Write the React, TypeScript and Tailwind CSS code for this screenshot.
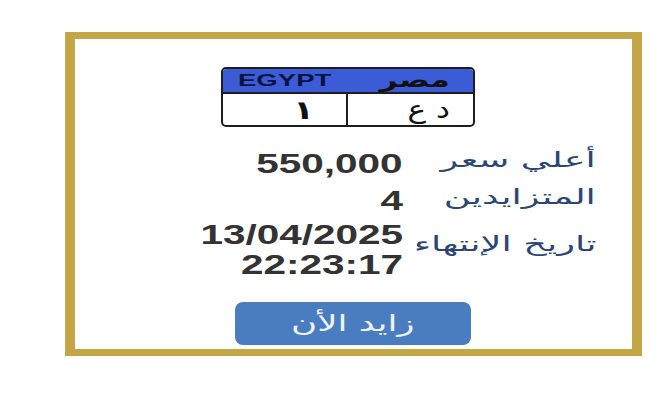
import React from "react";

const sans = { fontFamily: '"Liberation Sans", "DejaVu Sans", Arial, sans-serif' } as React.CSSProperties;
const ar = { fontFamily: '"DejaVu Sans", sans-serif' } as React.CSSProperties;

export default function App() {
  return (
    <div className="w-[650px] h-[410px] bg-white overflow-hidden" style={sans}>
      <div className="ml-[65px] mt-[32px] w-[577px] h-[324px] border-x-[10px] border-y-[7px] border-[#c3a746] bg-white flex flex-col">
        {/* Plate */}
        <div className="ml-[146px] mt-[28px] w-[254px] h-[60px] border-2 border-[#1e1e1e] rounded-[5px] overflow-hidden flex flex-col">
          <div className="h-[25px] bg-[#3c5bd6] flex items-center justify-between pl-[15px] pr-[23px] border-b-2 border-[#1e1e1e]">
            <span className="inline-block origin-left scale-x-[1.62] text-[17px] font-bold text-[#0b1440] leading-none">EGYPT</span>
            <span className="inline-block origin-right scale-x-[1.5] text-[21px] font-bold text-[#111] leading-none" style={ar}>مصر</span>
          </div>
          <div className="flex-1 flex">
            <div className="w-[125px] border-r-2 border-[#1e1e1e] flex items-center justify-end pr-[32px]">
              <span className="inline-block origin-right scale-x-[1.3] text-[26px] font-bold text-[#111] leading-none" style={ar}>١</span>
            </div>
            <div className="flex-1 flex items-center justify-end pr-[23px]">
              <span className="inline-block origin-right scale-x-[1.25] text-[25px] text-[#111] leading-none" style={ar}>د ع</span>
            </div>
          </div>
        </div>

        {/* Info rows */}
        <div className="mt-[19px] flex flex-col">
          <div className="h-[37px] flex items-center">
            <div className="w-[328px] h-[37px] flex justify-end text-[27px] leading-[37px]">
              <span className="inline-block origin-right scale-x-[1.5] font-bold text-[#333]">550,000</span>
            </div>
            <div className="w-[193px] flex justify-end text-[21px] leading-[30px]">
              <span className="inline-block origin-right scale-x-[1.75] -translate-y-[5px] text-[#2c4673]" style={ar}>أعلي سعر</span>
            </div>
          </div>
          <div className="h-[37px] flex items-center">
            <div className="w-[328px] h-[37px] flex justify-end text-[27px] leading-[37px]">
              <span className="inline-block origin-right scale-x-[1.5] font-bold text-[#333]">4</span>
            </div>
            <div className="w-[193px] flex justify-end text-[21px] leading-[30px]">
              <span className="inline-block origin-right scale-x-[1.75] -translate-y-[5px] text-[#2c4673]" style={ar}>المتزايدين</span>
            </div>
          </div>
          <div className="flex items-center">
            <div className="w-[328px] flex flex-col items-end text-[27px] leading-[30px]">
              <span className="block h-[30px]">
                <span className="inline-block origin-right scale-x-[1.5] font-bold text-[#333]">13/04/2025</span>
              </span>
              <span className="block h-[30px]">
                <span className="inline-block origin-right scale-x-[1.5] font-bold text-[#333]">22:23:17</span>
              </span>
            </div>
            <div className="w-[193px] flex justify-end text-[21px] leading-[30px]">
              <span className="inline-block origin-right scale-x-[1.75] -translate-y-[6px] text-[#2c4673]" style={ar}>تاريخ الإنتهاء</span>
            </div>
          </div>
        </div>

        {/* Button */}
        <div className="mt-[22px] ml-[160px] w-[236px] h-[43px] rounded-[8px] bg-[#4a7cc0] flex items-center justify-center">
          <span className="inline-block scale-x-[1.55] text-[23px] leading-none text-[#eef3fb]" style={ar}>زايد الأن</span>
        </div>
      </div>
    </div>
  );
}
